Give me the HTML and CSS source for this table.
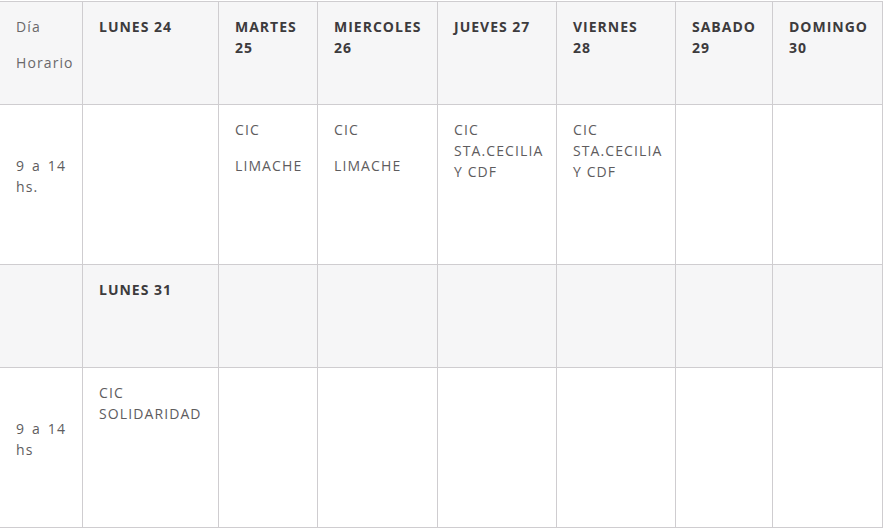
FILE: index.html
```html
<!DOCTYPE html>
<html lang="es">
<head>
<meta charset="utf-8">
<title>Horario</title>
<link rel="stylesheet" href="styles.css">
</head>
<body>
<table class="schedule">
  <colgroup>
    <col class="c1"><col class="c2"><col class="c3"><col class="c4"><col class="c5"><col class="c6"><col class="c7"><col class="c8">
  </colgroup>
  <tbody>
    <tr class="head-row">
      <td class="label"><p>Día</p><p>Horario</p></td>
      <td class="day">LUNES 24</td>
      <td class="day">MARTES 25</td>
      <td class="day">MIERCOLES 26</td>
      <td class="day">JUEVES 27</td>
      <td class="day">VIERNES 28</td>
      <td class="day">SABADO 29</td>
      <td class="day">DOMINGO 30</td>
    </tr>
    <tr class="body-row tall">
      <td class="hours"><p>9 a 14 hs.</p></td>
      <td></td>
      <td><p>CIC</p><p>LIMACHE</p></td>
      <td><p>CIC</p><p>LIMACHE</p></td>
      <td><p>CIC STA.CECILIA Y CDF</p></td>
      <td><p>CIC STA.CECILIA Y CDF</p></td>
      <td></td>
      <td></td>
    </tr>
    <tr class="head-row">
      <td></td>
      <td class="day">LUNES 31</td>
      <td></td><td></td><td></td><td></td><td></td><td></td>
    </tr>
    <tr class="body-row tall">
      <td class="hours"><p>9 a 14 hs</p></td>
      <td><p>CIC SOLIDARIDAD</p></td>
      <td></td><td></td><td></td><td></td><td></td><td></td>
    </tr>
  </tbody>
</table>
</body>
</html>
```
FILE: styles.css
```css
html, body {
  margin: 0;
  padding: 0;
  background: #ffffff;
}
body {
  font-family: "Open Sans", "Liberation Sans", sans-serif;
  font-size: 14px;
  line-height: 21px;
  color: #5e5c5e;
}
.schedule {
  border-collapse: collapse;
  table-layout: fixed;
  width: 883px;
  margin: 1px 0 0 -1px;
}
.c1 { width: 83px; }
.c2 { width: 136px; }
.c3 { width: 99px; }
.c4 { width: 120px; }
.c5 { width: 119px; }
.c6 { width: 119px; }
.c7 { width: 97px; }
.c8 { width: 110px; }
.schedule td {
  border: 1px solid #cfcdd0;
  padding: 14px 16px 16px 16px;
  vertical-align: top;
  letter-spacing: 1.1px;
}
.schedule p {
  margin: 0 0 15px 0;
}
.head-row td {
  background: #f6f6f7;
  height: 72px;
}
.tall td {
  height: 129px;
}
.schedule .day {
  font-weight: 700;
  color: #3d3b3d;
  letter-spacing: 1px;
  padding-right: 18px;
}
.label {
  color: #6a686a;
}
.hours {
  vertical-align: middle !important;
  text-align: justify;
}
```
